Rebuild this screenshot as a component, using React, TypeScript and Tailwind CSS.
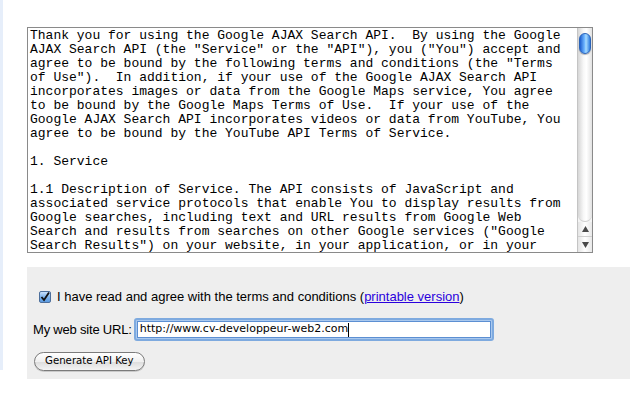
import React from 'react';

const termsLines = [
  'Thank you for using the Google AJAX Search API.  By using the Google',
  'AJAX Search API (the "Service" or the "API"), you ("You") accept and',
  'agree to be bound by the following terms and conditions (the "Terms',
  'of Use").  In addition, if your use of the Google AJAX Search API',
  'incorporates images or data from the Google Maps service, You agree',
  'to be bound by the Google Maps Terms of Use.  If your use of the',
  'Google AJAX Search API incorporates videos or data from YouTube, You',
  'agree to be bound by the YouTube API Terms of Service.',
  '',
  '1. Service',
  '',
  '1.1 Description of Service. The API consists of JavaScript and',
  'associated service protocols that enable You to display results from',
  'Google searches, including text and URL results from Google Web',
  'Search and results from searches on other Google services ("Google',
  'Search Results") on your website, in your application, or in your',
];

const Scrollbar = () => (
  <div className="flex flex-col w-[15px] h-full border-l border-[#c4c4c4] bg-[#f4f4f4]">
    <div className="relative flex-1 rounded-b-[7px] bg-[linear-gradient(to_right,#d6d6d6,#f8f8f8_40%,#ffffff_60%,#e2e2e2)] border-b border-[#cfcfcf]">
      <div className="absolute left-[1px] top-[5px] w-[12px] h-[21px] rounded-full border border-[#2a63b8] bg-[linear-gradient(to_right,#1d5fd0,#6fb6ff_45%,#a8dcff_60%,#2f7de0)] shadow-[0_1px_1px_rgba(0,0,0,0.3)]" />
    </div>
    <div className="flex items-center justify-center h-[15px] border-b border-[#cfcfcf] bg-[linear-gradient(to_right,#e4e4e4,#ffffff,#e8e8e8)]">
      <svg width="7" height="6" viewBox="0 0 7 6">
        <path d="M3.5 0 L7 6 L0 6 Z" fill="#4a4a4a" />
      </svg>
    </div>
    <div className="flex items-center justify-center h-[15px] bg-[linear-gradient(to_right,#e4e4e4,#ffffff,#e8e8e8)]">
      <svg width="7" height="6" viewBox="0 0 7 6">
        <path d="M0 0 L7 0 L3.5 6 Z" fill="#4a4a4a" />
      </svg>
    </div>
  </div>
);

const Checkbox = () => (
  <span className="flex items-center justify-center w-[12px] h-[12px] rounded-[2px] border border-[#4d6f9c] bg-[linear-gradient(to_bottom,#c9e1fb,#7fb3ea_50%,#5b9ae0)]">
    <svg width="10" height="10" viewBox="0 0 10 10">
      <path d="M1.5 5 L4 8 L9 0.5" fill="none" stroke="#111" strokeWidth="1.8" />
    </svg>
  </span>
);

export default function App() {
  return (
    <div className="flex w-[630px] h-[396px] bg-white overflow-hidden">
      <div className="w-[3px] h-[370px] bg-[#e6eefa]" />
      <div className="flex flex-col flex-1 pl-[24px] pt-[27px]">
        <div className="flex w-[566px] h-[226px] border border-[#8a8a8a] bg-white">
          <div className="flex-1 overflow-hidden pl-[2px] pt-[1px] font-['Liberation_Mono',monospace] text-[13px] leading-[14px] text-black whitespace-pre">
            {termsLines.map((line, i) => (
              <div key={i} className="h-[14px]">
                {line}
              </div>
            ))}
          </div>
          <Scrollbar />
        </div>
        <div className="mt-[14px] h-[112px] bg-[#eeeeee] font-['Liberation_Sans',Arial,sans-serif] text-[13px] text-black">
          <div className="flex items-center gap-[6px] pl-[12px] pt-[21px] h-[39px]">
            <Checkbox />
            <span>
              I have read and agree with the terms and conditions (
              <a href="#" className="text-[#2a00dd] underline">
                printable version
              </a>
              )
            </span>
          </div>
          <div className="flex items-center pl-[6px] mt-[12px] h-[23px]">
            <span className="tracking-[-0.2px]">My web site URL:</span>
            <div className="ml-[2px] flex items-center w-[360px] h-[23px] rounded-[3px] border-2 border-[#7eaadf] p-[1px] bg-[#a9c8ee]">
              <div className="flex items-center w-full h-full bg-white border border-[#5c8fd2] pl-[2px] font-['DejaVu_Sans',sans-serif] text-[11px]">
                <span>http://www.cv-developpeur-web2.com</span>
                <span className="w-[1px] h-[14px] bg-black" />
              </div>
            </div>
          </div>
          <div className="flex pl-[7px] mt-[11px]">
            <button className="h-[19px] px-[10px] rounded-full border border-[#7b7b7b] bg-[linear-gradient(to_bottom,#ffffff,#f0f0f0_50%,#dcdcdc_51%,#f4f4f4)] font-['DejaVu_Sans',sans-serif] text-[10.2px] text-black leading-none shadow-[0_1px_0_rgba(0,0,0,0.15)]">
              Generate API Key
            </button>
          </div>
        </div>
      </div>
    </div>
  );
}
